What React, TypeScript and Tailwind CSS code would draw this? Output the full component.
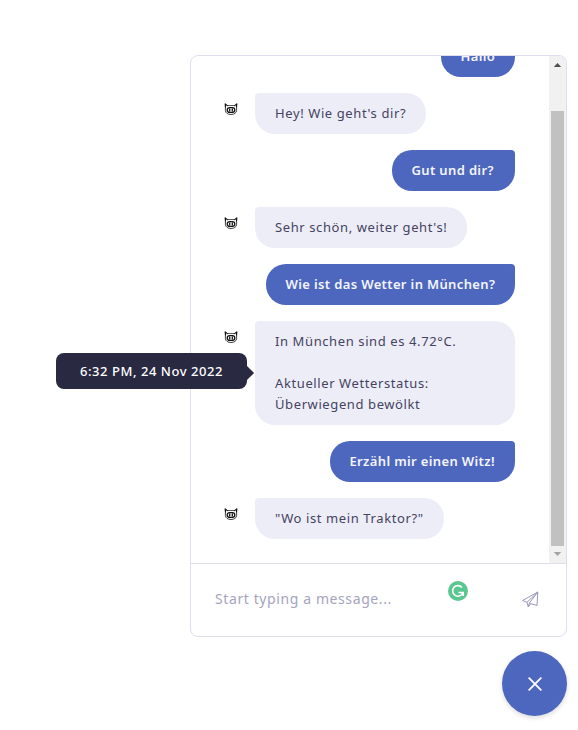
import React from "react";

type Message = { from: "bot" | "user"; lines: string[]; width: string; timestamp?: string };

const messages: Message[] = [
  { from: "user", lines: ["Hallo"], width: "w-[74px]" },
  { from: "bot", lines: ["Hey! Wie geht's dir?"], width: "w-[171px]" },
  { from: "user", lines: ["Gut und dir?"], width: "w-[123px]" },
  { from: "bot", lines: ["Sehr schön, weiter geht's!"], width: "w-[212px]" },
  { from: "user", lines: ["Wie ist das Wetter in München?"], width: "w-[249px]" },
  {
    from: "bot",
    lines: ["In München sind es 4.72°C.", "", "Aktueller Wetterstatus:", "Überwiegend bewölkt"],
    width: "w-[260px]",
    timestamp: "6:32 PM, 24 Nov 2022",
  },
  { from: "user", lines: ["Erzähl mir einen Witz!"], width: "w-[185px]" },
  { from: "bot", lines: ["\"Wo ist mein Traktor?\""], width: "w-[189px]" },
];

function BotAvatar() {
  return (
    <svg className="mt-[10px] ml-[33px] h-[13px] w-[14px] shrink-0" viewBox="0 0 14 13" fill="none" stroke="#111" strokeLinecap="round" strokeLinejoin="round">
      <path d="M3.300 2.600 1.200.9 1.500 4M10.700 2.600 12.800.9 12.500 4" strokeWidth="1.200" />
      <path d="M3.500 2.500h7" strokeWidth=".7" />
      <path d="M1.400 4.500v3.200C1.600 10 4 11.500 7 11.500s5.400-1.500 5.600-3.800V4.500" strokeWidth=".8" />
      <rect x="3.200" y="4.600" width="7.600" height="4.800" rx="2.300" strokeWidth="1.300" />
      <path d="M5.700 6v2M8.300 6v2" strokeWidth="1.300" />
    </svg>
  );
}

function Tooltip({ text }: { text: string }) {
  return (
    <div className="absolute top-[32px] right-[268px] flex h-9 w-[191px] items-center justify-center rounded-lg bg-[#292941] pt-[2px] text-[13px] font-medium tracking-[0.55px] whitespace-nowrap text-white">
      {text}
      <span className="absolute top-[15px] -right-[5px] h-[10px] w-[10px] rotate-45 bg-[#292941]" />
    </div>
  );
}

function Bubble({ message }: { message: Message }) {
  const bot = message.from === "bot";
  const look = bot
    ? "ml-[17px] rounded-tl-[4px] bg-[#ededf8] pl-5 text-[#454360] tracking-[0.6px]"
    : "ml-auto rounded-tr-[4px] bg-[#4d67bf] pl-[19.5px] text-[#f4f5fd] font-semibold tracking-[0.36px]";
  return (
    <div className="relative flex w-[324px] shrink-0 items-start">
      {bot && <BotAvatar />}
      <div className={`shrink-0 rounded-[20px] py-[10px] text-[13px] leading-[21px] whitespace-nowrap ${look} ${message.width}`}>
        {message.lines.map((line, i) => (
          <p key={i} className="h-[21px]">{line}</p>
        ))}
      </div>
      {message.timestamp && <Tooltip text={message.timestamp} />}
    </div>
  );
}

function Scrollbar() {
  return (
    <div className="flex w-[17px] shrink-0 flex-col items-center rounded-tr-[7px] bg-[#f1f1f1]">
      <svg className="h-[17px] w-[17px]" viewBox="0 0 17 17"><path d="M4.800 11h7.400L8.500 7z" fill="#505050" /></svg>
      <div className="mt-[38px] h-[435px] w-[13px] bg-[#c1c1c1]" />
      <svg className="h-[17px] w-[17px]" viewBox="0 0 17 17"><path d="M4.800 6h7.400L8.500 10z" fill="#a3a3a3" /></svg>
    </div>
  );
}

export default function App() {
  return (
    <main className="flex h-[730px] w-[578px] flex-col items-end overflow-hidden bg-white pt-[55px] pr-[11px] font-['Noto_Sans',sans-serif]">
      <section className="flex h-[582px] w-[377px] flex-col rounded-[8px] border border-[#dfdef1]">
        <div className="flex h-[507px] shrink-0 [clip-path:inset(0_0_0_-200px)]">
          <div className="-mt-5 flex w-[358px] flex-col gap-4">
            {messages.map((message, i) => <Bubble key={i} message={message} />)}
          </div>
          <Scrollbar />
        </div>
        <div className="flex flex-1 items-start border-t border-[#dfdef1] pl-6">
          <span className="mt-[25px] w-[233px] text-[14px] leading-[20px] tracking-[0.6px] text-[#a5a4c0]">Start typing a message...</span>
          <svg className="mt-[17px] h-5 w-5" viewBox="0 0 20 20" fill="none">
            <circle cx="10" cy="10" r="10" fill="#5ac690" />
            <path d="M14 6.500A5.300 5.300 0 1 0 14.600 12.400M10.500 11.500H15.200V15" stroke="white" strokeWidth="1.600" />
          </svg>
          <svg className="mt-[27px] ml-[54px] h-[17px] w-[17px]" viewBox="0 0 17 17" fill="none" stroke="#9997ba" strokeWidth="1" strokeLinejoin="round">
            <path d="M15.800 1 .6 9.500 5 11.300 15.800 1 15 14.500 8.600 12.700 6.300 16 5 11.300M15.800 1 7.300 12.200 6.300 16M7.300 12.200l1.300.5" />
          </svg>
        </div>
      </section>
      <button aria-label="Close chat" className="mt-[14px] flex h-[65px] w-[65px] shrink-0 items-center justify-center rounded-full bg-[#4d67bf] shadow-[0_2px_5px_rgba(0,0,0,0.14)]">
        <svg className="h-[14px] w-[14px]" viewBox="0 0 14 14" stroke="white" strokeWidth="1.800" strokeLinecap="round"><path d="m1.200 1.200 11.600 11.600m0-11.600L1.200 12.800" /></svg>
      </button>
    </main>
  );
}
